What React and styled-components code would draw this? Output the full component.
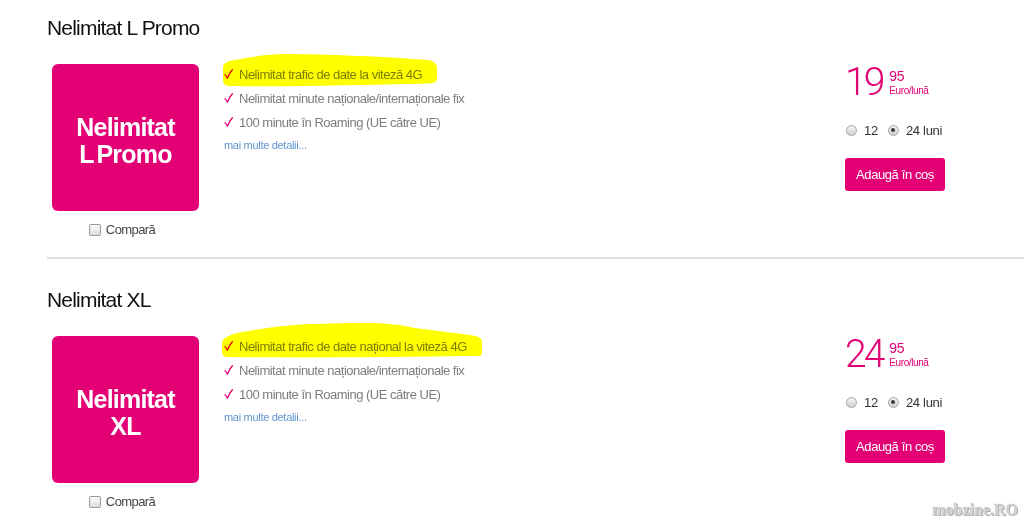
import React from 'react';
import styled, { createGlobalStyle } from 'styled-components';

const GlobalStyle = createGlobalStyle`
  html, body { margin: 0; padding: 0; background: #fff; }
  body { font-family: "Liberation Sans", Arial, sans-serif; color: #111; }
`;

const MAGENTA = '#e20074';

const Page = styled.div`
  position: relative;
  width: 1024px;
  height: 523px;
  overflow: hidden;
  background: #fff;
`;

const Section = styled.section`
  margin-left: 47px;
  padding-top: ${(p) => (p.$first ? '16px' : '29px')};
  padding-bottom: 20px;
  border-bottom: ${(p) => (p.$last ? 'none' : '2px solid #dedede')};
`;

const Title = styled.h2`
  margin: 0;
  font-family: "Liberation Sans", Arial, sans-serif;
  font-weight: normal;
  font-size: 21px;
  line-height: 24px;
  letter-spacing: -0.8px;
  color: #111;
`;

const Row = styled.div`
  display: flex;
  align-items: flex-start;
  margin-top: 24px;
`;

const LeftCol = styled.div`
  margin-left: 5px;
  width: 147px;
  display: flex;
  flex-direction: column;
  align-items: center;
`;

const NameBox = styled.div`
  width: 147px;
  height: 147px;
  border-radius: 6px;
  background: ${MAGENTA};
  color: #fff;
  display: flex;
  flex-direction: column;
  align-items: center;
  justify-content: center;
  font-family: "Liberation Sans", Arial, sans-serif;
  font-weight: bold;
  font-size: 25px;
  line-height: 27px;
  letter-spacing: -0.8px;
  word-spacing: -3px;
  text-align: center;
  padding-top: 7px;
  box-sizing: border-box;
`;

const Compare = styled.label`
  display: flex;
  align-items: center;
  gap: 5px;
  margin-top: 12px;
  margin-left: -7px;
  font-size: 13px;
  line-height: 14px;
  letter-spacing: -0.6px;
  color: #444;
`;

const CheckBox = styled.span`
  display: inline-block;
  width: 10px;
  height: 10px;
  border: 1px solid #9a9a9a;
  border-radius: 2px;
  background: linear-gradient(#fafafa, #dcdcdc);
`;

const Features = styled.div`
  flex: 1;
  margin-left: 23px;
  margin-top: -2px;
  display: flex;
  flex-direction: column;
`;

const FeatureItem = styled.div`
  position: relative;
  display: flex;
  align-items: center;
  height: 24px;
  font-size: 13px;
  letter-spacing: -0.5px;
  color: #7d7d7d;
  white-space: nowrap;
`;

const CheckIcon = styled.svg`
  width: 9px;
  height: 10px;
  margin-left: 2px;
  margin-right: 6px;
  flex: none;
`;

const Highlight = styled.svg`
  position: absolute;
  left: 0;
  top: ${(p) => p.$top}px;
  pointer-events: none;
  mix-blend-mode: multiply;
`;

const MoreLink = styled.a`
  margin-top: 2px;
  margin-left: 2px;
  font-size: 11px;
  line-height: 18px;
  letter-spacing: -0.3px;
  color: #5f94cf;
  text-decoration: none;
`;

const PriceCol = styled.div`
  width: 179px;
  flex: none;
  display: flex;
  flex-direction: column;
  align-items: flex-start;
`;

const PriceLine = styled.div`
  display: flex;
  align-items: flex-start;
  margin-top: -1px;
  color: ${MAGENTA};
`;

const BigPrice = styled.span`
  font-family: Roboto, "Liberation Sans", sans-serif;
  font-weight: 300;
  font-size: 39px;
  line-height: 39px;
  letter-spacing: -3px;
`;

const SupCol = styled.div`
  display: flex;
  flex-direction: column;
  margin-left: 7px;
  margin-top: 6px;
`;

const Cents = styled.span`
  font-size: 14px;
  line-height: 14px;
  letter-spacing: -0.3px;
`;

const Per = styled.span`
  margin-top: 2px;
  font-size: 10px;
  line-height: 12px;
  letter-spacing: -0.4px;
`;

const RadioRow = styled.div`
  display: flex;
  align-items: center;
  margin-top: 20px;
  height: 16px;
  font-size: 13px;
  letter-spacing: -0.3px;
  color: #333;
`;

const RadioLabel = styled.label`
  display: flex;
  align-items: center;
  gap: 7px;
  margin-right: 9px;
  margin-left: 1px;
`;

const RadioDot = styled.span`
  position: relative;
  display: inline-block;
  width: 9px;
  height: 9px;
  border: 1px solid #a3a3a3;
  border-radius: 50%;
  background: linear-gradient(#f4f4f4, #d2d2d2);
  &::after {
    content: '';
    display: ${(p) => (p.$checked ? 'block' : 'none')};
    position: absolute;
    left: 2.5px;
    top: 2.5px;
    width: 4px;
    height: 4px;
    border-radius: 50%;
    background: #3a3a3a;
  }
`;

const CartButton = styled.button`
  margin-top: 20px;
  width: 100px;
  height: 33px;
  border: none;
  border-radius: 3px;
  background: ${MAGENTA};
  color: #fff;
  font-family: "Liberation Sans", Arial, sans-serif;
  font-size: 13px;
  letter-spacing: -0.4px;
  padding: 0;
  cursor: pointer;
`;

const Watermark = styled.div`
  position: absolute;
  right: 6px;
  bottom: 4px;
  font-family: "Liberation Serif", "Times New Roman", serif;
  font-weight: bold;
  font-size: 16px;
  color: #d4d4d4;
  text-shadow: 0 0 1px #9a9a9a, 1px 1px 0 #b0b0b0;
`;

const products = [
  {
    title: 'Nelimitat L Promo',
    name: ['Nelimitat', 'L Promo'],
    features: [
      'Nelimitat trafic de date la viteză 4G',
      'Nelimitat minute naționale/internaționale fix',
      '100 minute în Roaming (UE către UE)',
    ],
    price: '19',
    cents: '95',
    hl: {
      top: -10,
      w: 218,
      h: 37,
      d: 'M1,16 C1,11 6,9 12,8 C30,5 45,2 64,2 C100,2 170,5 206,8 C212,9 215,12 215,16 L215,27 C215,30 211,31.5 206,31.5 C140,33 60,35 7,34 C3,34 1,31 1,28 Z',
    },
  },
  {
    title: 'Nelimitat XL',
    name: ['Nelimitat', 'XL'],
    features: [
      'Nelimitat trafic de date național la viteză 4G',
      'Nelimitat minute naționale/internaționale fix',
      '100 minute în Roaming (UE către UE)',
    ],
    price: '24',
    cents: '95',
    hl: {
      top: -12,
      w: 262,
      h: 37,
      d: 'M0,21 C0,16 10,11 26,9 C50,5 75,2 93,2 C115,1 130,1 143,1 C165,1 180,3 193,6 C215,9 235,11 248,13 C256,14 260,16 260,20 L260,31 C260,34 257,34 252,34 C170,35 80,36 6,35 C2,35 0,33 0,30 Z',
    },
  },
];

function Check() {
  return (
    <CheckIcon viewBox="0 0 9 10">
      <path d="M1,5.6 C2,6.6 2.8,7.8 3.4,9.2 C4.6,6 6.2,3.2 8.4,0.8" fill="none" stroke={MAGENTA} strokeWidth="1.3" strokeLinecap="round" strokeLinejoin="round" />
    </CheckIcon>
  );
}

function Product({ p, first, last }) {
  return (
    <Section $first={first} $last={last}>
      <Title>{p.title}</Title>
      <Row>
        <LeftCol>
          <NameBox>
            {p.name.map((l) => (
              <span key={l}>{l}</span>
            ))}
          </NameBox>
          <Compare>
            <CheckBox />
            Compară
          </Compare>
        </LeftCol>
        <Features>
          {p.features.map((f, i) => (
            <FeatureItem key={f}>
              <Check />
              {f}
              {i === 0 && (
                <Highlight $top={p.hl.top} width={p.hl.w} height={p.hl.h} viewBox={`0 0 ${p.hl.w} ${p.hl.h}`}>
                  <path d={p.hl.d} fill="#ffff00" />
                </Highlight>
              )}
            </FeatureItem>
          ))}
          <MoreLink href="#">mai multe detalii...</MoreLink>
        </Features>
        <PriceCol>
          <PriceLine>
            <BigPrice>{p.price}</BigPrice>
            <SupCol>
              <Cents>{p.cents}</Cents>
              <Per>Euro/lună</Per>
            </SupCol>
          </PriceLine>
          <RadioRow>
            <RadioLabel>
              <RadioDot />
              12
            </RadioLabel>
            <RadioLabel>
              <RadioDot $checked />
              24 luni
            </RadioLabel>
          </RadioRow>
          <CartButton>Adaugă în coș</CartButton>
        </PriceCol>
      </Row>
    </Section>
  );
}

export default function App() {
  return (
    <Page>
      <GlobalStyle />
      {products.map((p, i) => (
        <Product key={p.title} p={p} first={i === 0} last={i === products.length - 1} />
      ))}
      <Watermark>mobzine.RO</Watermark>
    </Page>
  );
}
